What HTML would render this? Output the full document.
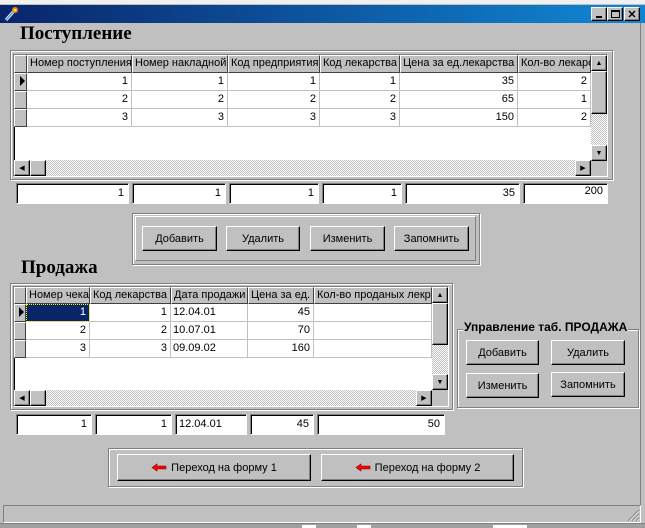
<!DOCTYPE html>
<html><head><meta charset="utf-8"><style>
*{box-sizing:border-box;margin:0;padding:0}
body{width:645px;height:528px;position:relative;overflow:hidden;background:#c0c0c0;font-family:"Liberation Sans",sans-serif;font-size:11px;color:#000}
.a{position:absolute}
.etched{border:1px solid #808080;box-shadow:1px 1px 0 #fff,inset 1px 1px 0 #fff}
.btn{position:absolute;border:1px solid;border-color:#fff #000 #000 #fff;box-shadow:inset -1px -1px 0 #808080;background:#c0c0c0;display:flex;align-items:center;justify-content:center;font-size:11px}
.edit{position:absolute;background:#fff;border:1px solid;border-color:#808080 #fff #fff #808080;box-shadow:inset 1px 1px 0 #000;text-align:right;padding:2px 4px 0 0;height:21px;line-height:14px;overflow:hidden}
.cell{position:absolute;border-right:1px solid #c0c0c0;border-bottom:1px solid #c0c0c0;background:#fff;text-align:right;padding-right:3px;line-height:17px;overflow:hidden;white-space:nowrap}
.hdr{position:absolute;background:#c0c0c0;border:1px solid;border-color:#fff #404040 #404040 #fff;line-height:15px;padding-left:2px;overflow:hidden;white-space:nowrap}
.hatch{position:absolute;background:repeating-conic-gradient(#fff 0 25%,#c0c0c0 0 50%) 0 0/2px 2px}
.title{font-family:"Liberation Serif",serif;font-weight:bold;font-size:19px}
</style></head><body>
<div class="a" style="left:0;top:0;width:645px;height:5px;background:#f0f0f0;border-bottom:1px solid #c0c0c0"></div>
<div class="a" style="left:0;top:5px;width:645px;height:18px;background:linear-gradient(90deg,#0a246a,#1084d0 95%)"></div>
<svg class="a" style="left:3px;top:6px" width="16" height="16"><line x1="3" y1="14" x2="11" y2="5" stroke="#fff" stroke-width="3"/><line x1="3" y1="14" x2="11" y2="5" stroke="#40a0e0" stroke-width="1.5"/><circle cx="12" cy="4" r="3" fill="#f08020"/><circle cx="12" cy="4" r="1.3" fill="#ff0"/></svg>
<div class="btn" style="left:591px;top:7px;width:16px;height:14px"><div style="width:6px;height:2px;background:#000;margin-top:6px"></div></div>
<div class="btn" style="left:607px;top:7px;width:16px;height:14px"><div style="width:9px;height:8px;border:1px solid #000;border-top-width:2px"></div></div>
<div class="btn" style="left:624px;top:7px;width:16px;height:14px;font-weight:bold;font-size:11px">✕</div>
<div class="a" style="left:640px;top:23px;width:1px;height:500px;background:#808080"></div>

<div class="a title" style="left:20px;top:23px">Поступление</div>
<div class="a etched" style="left:10px;top:50px;width:603px;height:130px"></div>
<div class="a" style="left:13px;top:54px;width:595px;height:123px;background:#fff;border:1px solid;border-color:#808080 #fff #fff #808080;box-shadow:inset 1px 1px 0 #000"></div>
<div class="hdr" style="left:14px;top:55px;width:13px;height:18px"></div>
<div class="hdr" style="left:27px;top:55px;width:105px;height:18px">Номер поступления</div>
<div class="hdr" style="left:132px;top:55px;width:96px;height:18px">Номер накладной</div>
<div class="hdr" style="left:228px;top:55px;width:92px;height:18px">Код предприятия</div>
<div class="hdr" style="left:320px;top:55px;width:80px;height:18px">Код лекарства</div>
<div class="hdr" style="left:400px;top:55px;width:118px;height:18px">Цена за ед.лекарства</div>
<div class="hdr" style="left:518px;top:55px;width:73px;height:18px">Кол-во лекарс</div>
<div class="hdr" style="left:14px;top:73px;width:13px;height:18px"><svg width="10" height="14"><path d="M3 2L8 7L3 12Z"/></svg></div>
<div class="hdr" style="left:14px;top:91px;width:13px;height:18px"></div>
<div class="hdr" style="left:14px;top:109px;width:13px;height:18px"></div>
<div class="cell" style="left:27px;top:73px;width:105px;height:18px">1</div><div class="cell" style="left:132px;top:73px;width:96px;height:18px">1</div><div class="cell" style="left:228px;top:73px;width:92px;height:18px">1</div><div class="cell" style="left:320px;top:73px;width:80px;height:18px">1</div><div class="cell" style="left:400px;top:73px;width:118px;height:18px">35</div><div class="cell" style="left:518px;top:73px;width:73px;height:18px">2</div>
<div class="cell" style="left:27px;top:91px;width:105px;height:18px">2</div><div class="cell" style="left:132px;top:91px;width:96px;height:18px">2</div><div class="cell" style="left:228px;top:91px;width:92px;height:18px">2</div><div class="cell" style="left:320px;top:91px;width:80px;height:18px">2</div><div class="cell" style="left:400px;top:91px;width:118px;height:18px">65</div><div class="cell" style="left:518px;top:91px;width:73px;height:18px">1</div>
<div class="cell" style="left:27px;top:109px;width:105px;height:18px">3</div><div class="cell" style="left:132px;top:109px;width:96px;height:18px">3</div><div class="cell" style="left:228px;top:109px;width:92px;height:18px">3</div><div class="cell" style="left:320px;top:109px;width:80px;height:18px">3</div><div class="cell" style="left:400px;top:109px;width:118px;height:18px">150</div><div class="cell" style="left:518px;top:109px;width:73px;height:18px">2</div>
<div class="hatch" style="left:591px;top:55px;width:16px;height:106px"></div>
<div class="btn" style="left:591px;top:55px;width:16px;height:16px;font-size:7px">▲</div>
<div class="btn" style="left:591px;top:71px;width:16px;height:43px"></div>
<div class="btn" style="left:591px;top:145px;width:16px;height:16px;font-size:7px">▼</div>
<div class="hatch" style="left:14px;top:160px;width:577px;height:16px"></div>
<div class="btn" style="left:14px;top:160px;width:16px;height:16px;font-size:7px">◀</div>
<div class="btn" style="left:30px;top:160px;width:16px;height:16px"></div>
<div class="btn" style="left:575px;top:160px;width:16px;height:16px;font-size:7px">▶</div>
<div class="a" style="left:591px;top:161px;width:16px;height:15px;background:#c0c0c0"></div>
<div class="edit" style="left:16px;top:183px;width:113px">1</div>
<div class="edit" style="left:132px;top:183px;width:94px">1</div>
<div class="edit" style="left:229px;top:183px;width:90px">1</div>
<div class="edit" style="left:322px;top:183px;width:80px">1</div>
<div class="edit" style="left:405px;top:183px;width:115px">35</div>
<div class="edit" style="left:523px;top:183px;width:85px;padding-top:0">200</div>
<div class="a etched" style="left:132px;top:213px;width:348px;height:52px"></div>
<div class="a etched" style="left:135px;top:216px;width:341px;height:45px;box-shadow:none;border-color:#fff #808080 #808080 #fff"></div>
<div class="btn" style="left:142px;top:226px;width:75px;height:25px">Добавить</div>
<div class="btn" style="left:226px;top:226px;width:74px;height:25px">Удалить</div>
<div class="btn" style="left:310px;top:226px;width:75px;height:25px">Изменить</div>
<div class="btn" style="left:394px;top:226px;width:75px;height:25px">Запомнить</div>

<div class="a title" style="left:21px;top:257px">Продажа</div>
<div class="a etched" style="left:10px;top:283px;width:443px;height:127px"></div>
<div class="a" style="left:13px;top:286px;width:436px;height:121px;background:#fff;border:1px solid;border-color:#808080 #fff #fff #808080;box-shadow:inset 1px 1px 0 #000"></div>
<div class="hdr" style="left:14px;top:287px;width:12px;height:17px"></div>
<div class="hdr" style="left:26px;top:287px;width:64px;height:17px">Номер чека</div>
<div class="hdr" style="left:90px;top:287px;width:81px;height:17px">Код лекарства</div>
<div class="hdr" style="left:171px;top:287px;width:77px;height:17px">Дата продажи</div>
<div class="hdr" style="left:248px;top:287px;width:66px;height:17px">Цена за ед.</div>
<div class="hdr" style="left:314px;top:287px;width:118px;height:17px">Кол-во проданых лекр</div>
<div class="hdr" style="left:14px;top:304px;width:12px;height:18px"><svg width="10" height="14"><path d="M2 2L7 7L2 12Z"/></svg></div>
<div class="hdr" style="left:14px;top:322px;width:12px;height:18px"></div>
<div class="hdr" style="left:14px;top:340px;width:12px;height:18px"></div>
<div class="cell" style="left:26px;top:304px;width:64px;height:18px;background:#0a246a;color:#fff;outline:1px dotted #ff0;outline-offset:-1px">1</div><div class="cell" style="left:90px;top:304px;width:81px;height:18px">1</div><div class="cell" style="left:171px;top:304px;width:77px;height:18px;text-align:left;padding-left:2px">12.04.01</div><div class="cell" style="left:248px;top:304px;width:66px;height:18px">45</div><div class="cell" style="left:314px;top:304px;width:118px;height:18px"></div>
<div class="cell" style="left:26px;top:322px;width:64px;height:18px">2</div><div class="cell" style="left:90px;top:322px;width:81px;height:18px">2</div><div class="cell" style="left:171px;top:322px;width:77px;height:18px;text-align:left;padding-left:2px">10.07.01</div><div class="cell" style="left:248px;top:322px;width:66px;height:18px">70</div><div class="cell" style="left:314px;top:322px;width:118px;height:18px"></div>
<div class="cell" style="left:26px;top:340px;width:64px;height:18px">3</div><div class="cell" style="left:90px;top:340px;width:81px;height:18px">3</div><div class="cell" style="left:171px;top:340px;width:77px;height:18px;text-align:left;padding-left:2px">09.09.02</div><div class="cell" style="left:248px;top:340px;width:66px;height:18px">160</div><div class="cell" style="left:314px;top:340px;width:118px;height:18px"></div>
<div class="hatch" style="left:432px;top:287px;width:16px;height:103px"></div>
<div class="btn" style="left:432px;top:287px;width:16px;height:16px;font-size:7px">▲</div>
<div class="btn" style="left:432px;top:303px;width:16px;height:42px"></div>
<div class="btn" style="left:432px;top:374px;width:16px;height:16px;font-size:7px">▼</div>
<div class="hatch" style="left:14px;top:390px;width:418px;height:16px"></div>
<div class="btn" style="left:14px;top:390px;width:16px;height:16px;font-size:7px">◀</div>
<div class="btn" style="left:30px;top:390px;width:16px;height:16px"></div>
<div class="btn" style="left:416px;top:390px;width:16px;height:16px;font-size:7px">▶</div>
<div class="a" style="left:432px;top:390px;width:16px;height:16px;background:#c0c0c0"></div>
<div class="a etched" style="left:457px;top:329px;width:182px;height:79px"></div>
<div class="a" style="left:463px;top:320px;background:#c0c0c0;font-weight:bold;font-size:12px;padding:0 1px">Управление таб. ПРОДАЖА</div>
<div class="btn" style="left:466px;top:340px;width:73px;height:25px">Добавить</div>
<div class="btn" style="left:551px;top:340px;width:74px;height:25px">Удалить</div>
<div class="btn" style="left:466px;top:373px;width:73px;height:25px">Изменить</div>
<div class="btn" style="left:551px;top:372px;width:74px;height:25px">Запомнить</div>
<div class="edit" style="left:16px;top:414px;width:76px">1</div>
<div class="edit" style="left:95px;top:414px;width:77px">1</div>
<div class="edit" style="left:175px;top:414px;width:72px;text-align:left;padding-left:3px">12.04.01</div>
<div class="edit" style="left:250px;top:414px;width:64px">45</div>
<div class="edit" style="left:317px;top:414px;width:128px">50</div>
<div class="a etched" style="left:108px;top:448px;width:415px;height:39px"></div>
<div class="btn" style="left:117px;top:454px;width:194px;height:27px"><svg width="16" height="9" style="margin-right:4px"><path d="M1 4.5L6 1V3H15V6H6V8Z" fill="#f00" stroke="#800" stroke-width=".6"/></svg>Переход на форму 1</div>
<div class="btn" style="left:321px;top:454px;width:193px;height:27px"><svg width="16" height="9" style="margin-right:4px"><path d="M1 4.5L6 1V3H15V6H6V8Z" fill="#f00" stroke="#800" stroke-width=".6"/></svg>Переход на форму 2</div>
<div class="a" style="left:3px;top:505px;width:638px;height:18px;border:1px solid;border-color:#808080 #fff #fff #808080"></div>
<svg class="a" style="left:627px;top:509px" width="13" height="13"><path d="M12 1L1 12M12 5L5 12M12 9L9 12" stroke="#808080" stroke-width="1.2"/><path d="M12 2L2 12M12 6L6 12M12 10L10 12" stroke="#fff" stroke-width=".6"/></svg>
<div class="a" style="left:0;top:523px;width:645px;height:5px;background:#a0a0a0;border-top:1px solid #808080"></div>
<div class="a" style="left:302px;top:525px;width:14px;height:3px;background:#fff"></div>
<div class="a" style="left:357px;top:525px;width:14px;height:3px;background:#fff"></div>
<div class="a" style="left:493px;top:525px;width:34px;height:3px;background:#fff"></div>
</body></html>
